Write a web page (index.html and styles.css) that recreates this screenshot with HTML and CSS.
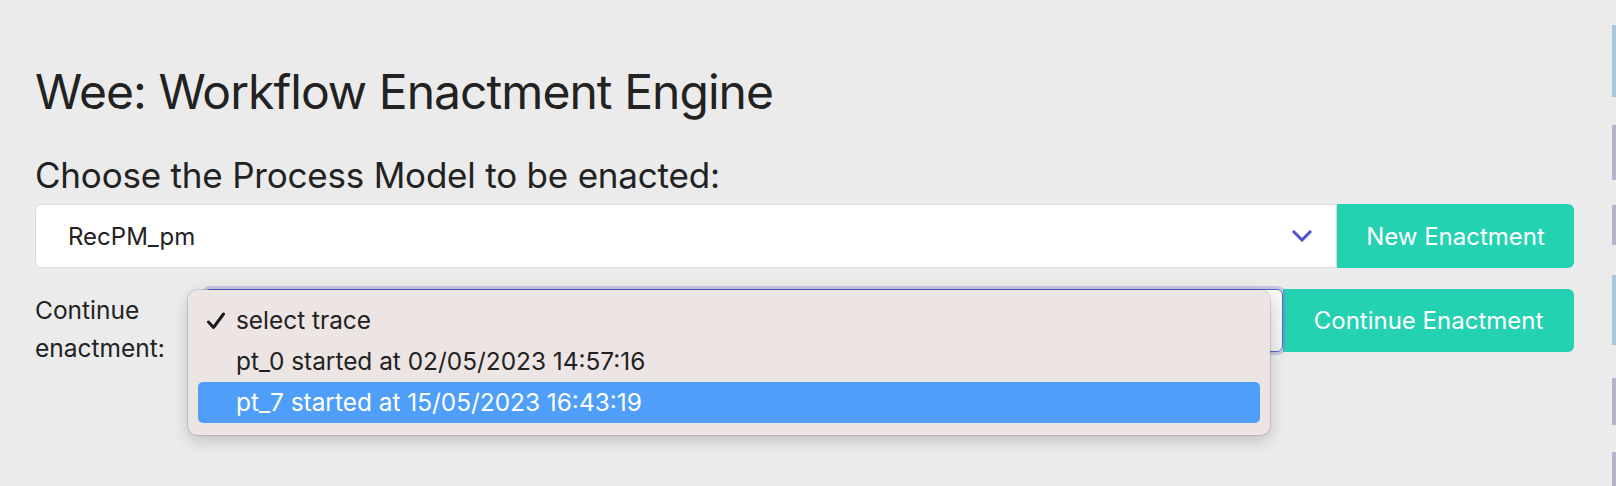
FILE: index.html
```html
<!DOCTYPE html>
<html lang="en">
<head>
<meta charset="utf-8">
<title>Wee: Workflow Enactment Engine</title>
<link rel="stylesheet" href="styles.css">
</head>
<body>
<div class="page">
  <main class="container">
    <h1 class="title">Wee: Workflow Enactment Engine</h1>
    <h3 class="subtitle">Choose the Process Model to be enacted:</h3>
    <div class="row row-model">
      <div class="select select-model">
        <span class="select-value">RecPM_pm</span>
        <svg class="chevron" width="20" height="12" viewBox="0 0 20 12"><path d="M2 2 L10 10 L18 2" fill="none" stroke="#4a55c8" stroke-width="3" stroke-linecap="square"/></svg>
      </div>
      <button class="btn btn-new">New Enactment</button>
    </div>
    <div class="row row-continue">
      <label class="continue-label">Continue<br>enactment:</label>
      <div class="select-wrap">
        <div class="select select-trace"></div>
        <div class="popup">
          <div class="item"><svg class="check" width="20" height="18" viewBox="0 0 20 18"><path d="M2.5 10 L7.5 15.5 L17.5 2" fill="none" stroke="#1a1a1a" stroke-width="3" stroke-linecap="round" stroke-linejoin="round"/></svg>select trace</div>
          <div class="item">pt_0 started at 02/05/2023 14:57:16</div>
          <div class="item item-active">pt_7 started at 15/05/2023 16:43:19</div>
        </div>
      </div>
      <button class="btn btn-continue">Continue Enactment</button>
    </div>
  </main>
  <div class="edge"></div>
</div>
</body>
</html>
```
FILE: styles.css
```css
html, body {
  margin: 0;
  padding: 0;
  background: #ebebeb;
  height: 100%;
}
body {
  font-family: Inter, "Noto Sans", sans-serif;
  color: #222;
}
.page {
  display: flex;
  height: 486px;
}
.container {
  flex: 1;
  padding: 0 38px 0 35px;
}
.edge {
  width: 4px;
  background: linear-gradient(to bottom,
    #ebebeb 0, #ebebeb 25px,
    #a9c7d8 25px, #a9c7d8 97px,
    #ebebeb 97px, #ebebeb 125px,
    #b0b5cc 125px, #b0b5cc 180px,
    #ebebeb 180px, #ebebeb 205px,
    #b0b5cc 205px, #b0b5cc 245px,
    #ebebeb 245px, #ebebeb 275px,
    #a9c7d8 275px, #a9c7d8 345px,
    #ebebeb 345px, #ebebeb 378px,
    #b0b5cc 378px, #b0b5cc 425px,
    #ebebeb 425px, #ebebeb 452px,
    #b0b5cc 452px, #b0b5cc 486px);
}
.title {
  margin: 62px 0 0;
  font-size: 48px;
  line-height: 60px;
  font-weight: 400;
  letter-spacing: -0.95px;
}
.subtitle {
  margin: 32px 0 0;
  font-size: 35px;
  line-height: 43px;
  font-weight: 400;
  letter-spacing: -0.2px;
}
.row {
  display: flex;
  align-items: flex-start;
}
.row-model {
  margin-top: 7px;
  height: 64px;
}
.select {
  box-sizing: border-box;
  background: #fff;
  border: 1px solid #dcdcdc;
  height: 64px;
  display: flex;
  align-items: center;
}
.select-model {
  flex: 1;
  border-radius: 6px 0 0 6px;
  padding: 0 24px 0 32px;
  justify-content: space-between;
}
.select-value {
  font-size: 24px;
}
.chevron {
  display: block;
}
.btn {
  box-sizing: border-box;
  border: none;
  background: #24d2b2;
  color: #fff;
  font-family: Inter, "Noto Sans", sans-serif;
  font-size: 24px;
  height: 64px;
  padding: 0 26px;
  border-radius: 0 6px 6px 0;
}
.btn-new {
  width: 237px;
}
.btn-continue {
  width: 291px;
  height: 63px;
}
.row-continue {
  margin-top: 21px;
}
.continue-label {
  width: 169px;
  padding-top: 2px;
  font-size: 24.5px;
  line-height: 38px;
}
.select-wrap {
  flex: 1;
  position: relative;
  height: 63px;
}
.select-trace {
  height: 63px;
  border: 1px solid #5560d0;
  border-radius: 6px;
  box-shadow: 0 0 0 3px rgba(120, 128, 200, 0.35);
  background: linear-gradient(to bottom, #fafafa, #f0f0f0);
}
.popup {
  position: absolute;
  left: -16px;
  top: 1px;
  width: 1082px;
  box-sizing: border-box;
  padding: 10px 10px 12px;
  background: #ede5e4;
  border-radius: 9px;
  box-shadow: 0 0 0 1px rgba(0,0,0,0.12), 0 6px 16px rgba(0,0,0,0.18);
  font-family: Inter, "Noto Sans", sans-serif;
  font-size: 24.4px;
}
.item {
  position: relative;
  height: 41px;
  line-height: 41px;
  padding-left: 38px;
  border-radius: 5px;
  color: #222;
}
.check {
  position: absolute;
  left: 8px;
  top: 12px;
}
.item-active {
  background: #4f9ffa;
  color: #fff;
}
```
